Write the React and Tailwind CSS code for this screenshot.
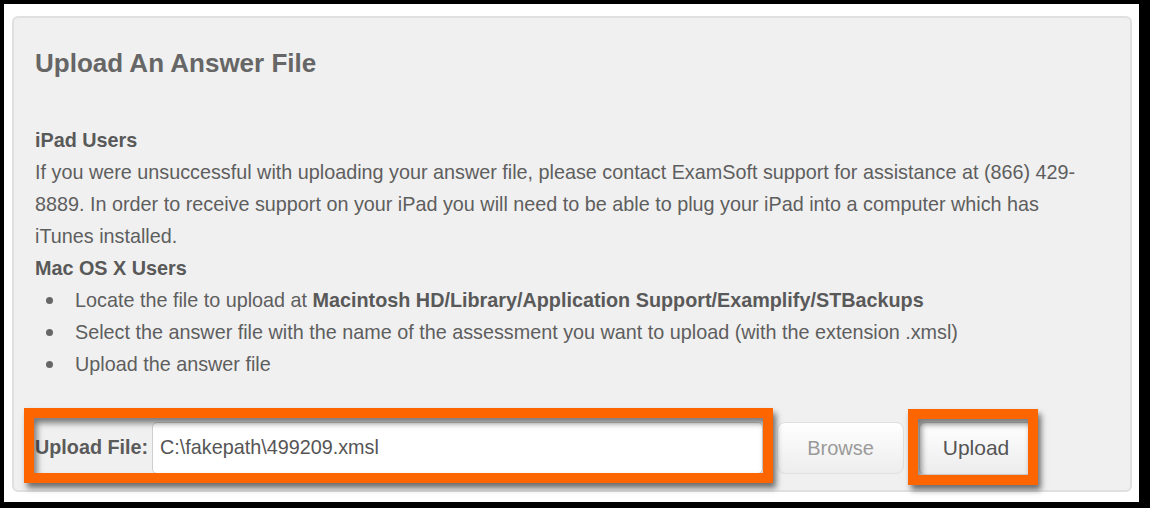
import React from "react";

const font = { fontFamily: '"Liberation Sans", Arial, sans-serif' };

function Bullet({ children }) {
  return (
    <li className="flex items-center h-[32px] whitespace-nowrap">
      <span className="ml-[11px] mr-[22px] w-[7px] h-[7px] rounded-full bg-[#666] shrink-0" />
      <span>{children}</span>
    </li>
  );
}

function Frame({ className }) {
  return (
    <div
      className={
        "pointer-events-none absolute border-[10px] border-[#fc6500] shadow-[3px_5px_6px_rgba(0,0,0,0.55),inset_3px_5px_6px_rgba(0,0,0,0.5)] " +
        className
      }
    />
  );
}

export default function App() {
  return (
    <div
      className="w-[1150px] h-[508px] bg-black pt-[4px] pl-[4px] overflow-hidden"
      style={font}
    >
      <div className="w-[1135px] h-[498px] bg-white pt-[12px] pl-[8px]">
        <div className="w-[1120px] h-[476px] bg-[#f0f0f0] border-2 border-[#e0e0e0] rounded-[6px] pl-[21px] pt-[29px] text-[#5e5e5e] text-[19.8px]">
          <h1 className="text-[26px] leading-[32px] font-bold text-[#666]">
            Upload An Answer File
          </h1>

          <div className="mt-[45px] leading-[32px] whitespace-nowrap">
            <div className="font-bold text-[#595959]">iPad Users</div>
            <p>
              If you were unsuccessful with uploading your answer file, please
              contact ExamSoft support for assistance at (866) 429-
              <br />
              8889. In order to receive support on your iPad you will need to
              be able to plug your iPad into a computer which has
              <br />
              iTunes installed.
            </p>
            <div className="font-bold text-[#595959]">Mac OS X Users</div>
            <ul>
              <Bullet>
                Locate the file to upload at{" "}
                <b className="text-[#595959]">
                  Macintosh HD/Library/Application Support/Examplify/STBackups
                </b>
              </Bullet>
              <Bullet>
                Select the answer file with the name of the assessment you want
                to upload (with the extension .xmsl)
              </Bullet>
              <Bullet>Upload the answer file</Bullet>
            </ul>
          </div>

          <div className="mt-[42px] flex items-center h-[52px]">
            <div className="relative flex items-center h-[52px]">
              <span className="font-bold text-[#5a5a5a] w-[117px]">
                Upload File:
              </span>
              <div className="w-[611px] h-[52px] bg-white border border-[#cfcfcf] rounded-[5px] flex items-center pl-[7px] text-[#555]">
                C:\fakepath\499209.xmsl
              </div>
              <Frame className="left-[-11px] right-[-10px] top-[-14px] bottom-[-9px]" />
            </div>
            <button className="ml-[14px] w-[127px] h-[52px] rounded-[8px] border border-[#e0e0e0] bg-gradient-to-b from-white to-[#ededed] text-[#9a9a9a] text-[20px]">
              Browse
            </button>
            <div className="relative ml-[15px]">
              <button className="w-[114px] h-[53px] rounded-[6px] border border-[#d0d0d0] bg-gradient-to-b from-white to-[#ececec] text-[#555] text-[21px]">
                Upload
              </button>
              <Frame className="left-[-11px] right-[-5px] top-[-13px] bottom-[-10px]" />
            </div>
          </div>
        </div>
      </div>
    </div>
  );
}
